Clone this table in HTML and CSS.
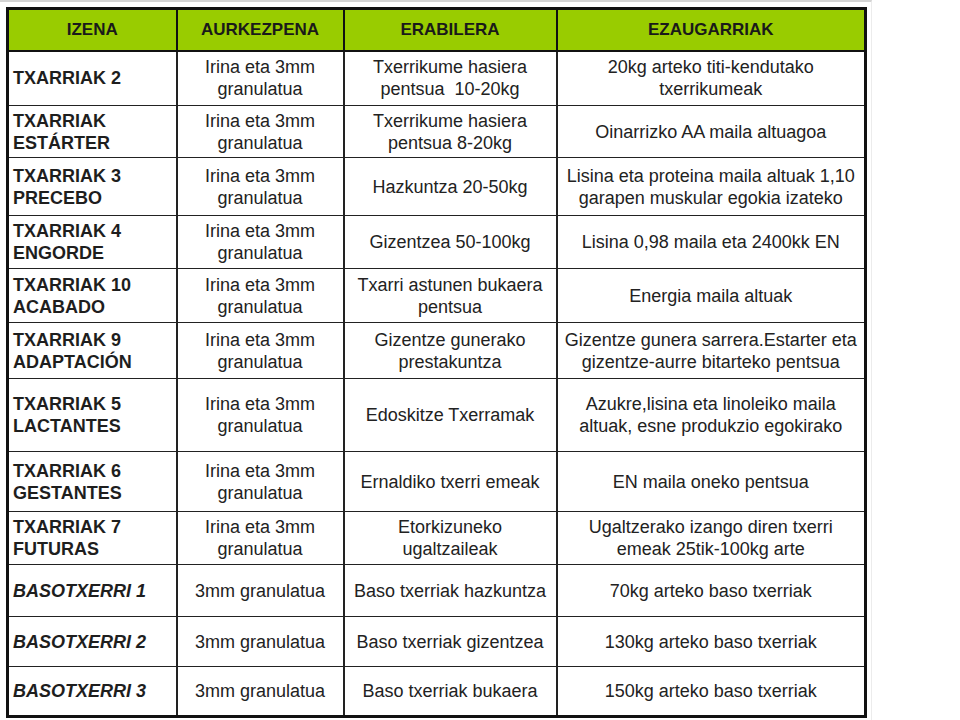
FILE: index.html
```html
<!DOCTYPE html>
<html lang="eu">
<head>
<meta charset="utf-8">
<title>Txarriak pentsuak</title>
<link rel="stylesheet" href="styles.css">
</head>
<body>
<div class="sheet">
  <table class="feed">
    <colgroup>
      <col class="c-name">
      <col class="c-pres">
      <col class="c-use">
      <col class="c-feat">
    </colgroup>
    <thead>
      <tr class="h42">
        <th>IZENA</th>
        <th>AURKEZPENA</th>
        <th>ERABILERA</th>
        <th>EZAUGARRIAK</th>
      </tr>
    </thead>
    <tbody>
      <tr class="h55">
        <td class="name">TXARRIAK 2</td>
        <td>Irina eta 3mm<br>granulatua</td>
        <td>Txerrikume hasiera<br>pentsua&nbsp; 10-20kg</td>
        <td>20kg arteko titi-kendutako<br>txerrikumeak</td>
      </tr>
      <tr class="h52">
        <td class="name">TXARRIAK<br>ESTÁRTER</td>
        <td>Irina eta 3mm<br>granulatua</td>
        <td>Txerrikume hasiera<br>pentsua 8-20kg</td>
        <td>Oinarrizko AA maila altuagoa</td>
      </tr>
      <tr class="h58">
        <td class="name">TXARRIAK 3<br>PRECEBO</td>
        <td>Irina eta 3mm<br>granulatua</td>
        <td>Hazkuntza 20-50kg</td>
        <td>Lisina eta proteina maila altuak 1,10<br>garapen muskular egokia izateko</td>
      </tr>
      <tr class="h53">
        <td class="name">TXARRIAK 4<br>ENGORDE</td>
        <td>Irina eta 3mm<br>granulatua</td>
        <td>Gizentzea 50-100kg</td>
        <td>Lisina 0,98 maila eta 2400kk EN</td>
      </tr>
      <tr class="h54">
        <td class="name">TXARRIAK 10<br>ACABADO</td>
        <td>Irina eta 3mm<br>granulatua</td>
        <td>Txarri astunen bukaera<br>pentsua</td>
        <td>Energia maila altuak</td>
      </tr>
      <tr class="h56">
        <td class="name">TXARRIAK 9<br>ADAPTACIÓN</td>
        <td>Irina eta 3mm<br>granulatua</td>
        <td>Gizentze gunerako<br>prestakuntza</td>
        <td>Gizentze gunera sarrera.Estarter eta<br>gizentze-aurre bitarteko pentsua</td>
      </tr>
      <tr class="h73">
        <td class="name">TXARRIAK 5<br>LACTANTES</td>
        <td>Irina eta 3mm<br>granulatua</td>
        <td>Edoskitze Txerramak</td>
        <td>Azukre,lisina eta linoleiko maila<br>altuak, esne produkzio egokirako</td>
      </tr>
      <tr class="h60">
        <td class="name">TXARRIAK 6<br>GESTANTES</td>
        <td>Irina eta 3mm<br>granulatua</td>
        <td>Ernaldiko txerri emeak</td>
        <td>EN maila oneko pentsua</td>
      </tr>
      <tr class="h53">
        <td class="name">TXARRIAK 7<br>FUTURAS</td>
        <td>Irina eta 3mm<br>granulatua</td>
        <td>Etorkizuneko<br>ugaltzaileak</td>
        <td>Ugaltzerako izango diren txerri<br>emeak 25tik-100kg arte</td>
      </tr>
      <tr class="h52">
        <td class="name wild">BASOTXERRI 1</td>
        <td>3mm granulatua</td>
        <td>Baso txerriak hazkuntza</td>
        <td>70kg arteko baso txerriak</td>
      </tr>
      <tr class="h50">
        <td class="name wild">BASOTXERRI 2</td>
        <td>3mm granulatua</td>
        <td>Baso txerriak gizentzea</td>
        <td>130kg arteko baso txerriak</td>
      </tr>
      <tr class="h50">
        <td class="name wild">BASOTXERRI 3</td>
        <td>3mm granulatua</td>
        <td>Baso txerriak bukaera</td>
        <td>150kg arteko baso txerriak</td>
      </tr>
    </tbody>
  </table>
</div>
</body>
</html>
```

FILE: styles.css
```css
html, body {
  margin: 0;
  padding: 0;
  background: #ffffff;
}

body {
  font-family: "Liberation Sans", Arial, sans-serif;
  color: #222222;
}

.sheet {
  width: 872px;
  height: 720px;
  border-top: 2px solid #d4d4d4;
  border-right: 1px solid #ececec;
  box-sizing: border-box;
  padding: 5px 0 0 6px;
}

.feed {
  border-collapse: collapse;
  table-layout: fixed;
  border: 3px solid #111111;
  width: 861px;
}

.c-name { width: 169px; }
.c-pres { width: 167px; }
.c-use  { width: 213px; }
.c-feat { width: 309px; }

.feed th {
  background: #99cc00;
  color: #1a1a1a;
  font-size: 17px;
  font-weight: bold;
  text-align: center;
  border: 2px solid #111111;
  padding: 0;
}

.feed td {
  font-size: 18px;
  line-height: 22px;
  text-align: center;
  vertical-align: middle;
  white-space: nowrap;
  border: 1px solid #222222;
  border-left-width: 2px;
  padding: 0 2px;
  overflow: hidden;
}

.feed td.name {
  text-align: left;
  font-weight: bold;
  padding-left: 4px;
  color: #1e1e1e;
}

.feed td.wild {
  font-style: italic;
}

.h42 { height: 42px; }
.h50 { height: 50px; }
.h52 { height: 52px; }
.h53 { height: 53px; }
.h54 { height: 54px; }
.h55 { height: 55px; }
.h56 { height: 56px; }
.h58 { height: 58px; }
.h60 { height: 60px; }
.h73 { height: 73px; }
```
